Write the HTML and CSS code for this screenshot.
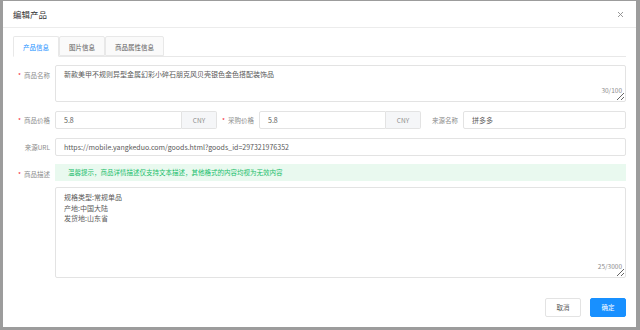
FILE: index.html
```html
<!DOCTYPE html>
<html lang="zh-CN">
<head>
    <meta charset="UTF-8">
    <meta name="viewport" content="width=device-width, initial-scale=1.0">
    <title>编辑产品</title>
    <link rel="stylesheet" href="styles.css">
</head>
<body>
    <div class="modal">
        <div class="modal_header">
            <span class="modal_title">编辑产品</span>
            <a href="" class="close">
                <svg width="7" height="7" viewBox="0 0 7 7"><path d="M1 1L6 6M6 1L1 6" stroke="#8c8c8c" stroke-width="0.9"/></svg>
            </a>
        </div>
        <div class="modal_body">
            <ul class="tabs">
                <li class="on">产品信息</li>
                <li>图片信息</li>
                <li>商品属性信息</li>
            </ul>

            <div class="form_row row_top">
                <label class="req">商品名称</label>
                <div class="field">
                    <textarea class="ta ta_name" readonly>新款美甲不规则异型金属幻彩小碎石朋克风贝壳银色金色搭配装饰品</textarea>
                    <span class="count">30/100</span>
                </div>
            </div>

            <div class="form_row">
                <label class="req">商品价格</label>
                <div class="group">
                    <span class="input">5.8</span>
                    <span class="addon">CNY</span>
                </div>
                <label class="req sub">采购价格</label>
                <div class="group">
                    <span class="input">5.8</span>
                    <span class="addon">CNY</span>
                </div>
                <label class="sub">来源名称</label>
                <span class="input grow">拼多多</span>
            </div>

            <div class="form_row">
                <label>来源URL</label>
                <span class="input grow">https://mobile.yangkeduo.com/goods.html?goods_id=297321976352</span>
            </div>

            <div class="form_row row_top">
                <label class="req">商品描述</label>
                <div class="field">
                    <div class="alert">温馨提示，商品详情描述仅支持文本描述，其他格式的内容均视为无效内容</div>
                    <textarea class="ta ta_desc" readonly>规格类型:常规单品
产地:中国大陆
发货地:山东省</textarea>
                    <span class="count">25/3000</span>
                </div>
            </div>
        </div>
        <div class="modal_footer">
            <a href="" class="btn">取消</a>
            <a href="" class="btn primary">确定</a>
        </div>
    </div>
</body>
</html>
```

FILE: styles.css
```css
*{margin:0; padding:0; box-sizing:border-box;}
a{text-decoration:none;}
ul,li{list-style:none;}

body{
    background-color:#9c9c9c;
    font-family:"Noto Sans CJK SC", "Noto Sans", sans-serif;
    color:#595959;
}

.modal{
    margin:1px 4px 0 3px;
    height:326px;
    background-color:#fff;
    display:flex;
    flex-direction:column;
}
.modal_header{
    height:27px;
    padding:0 12px 0 10px;
    border-bottom:1px solid #ececec;
    display:flex;
    align-items:center;
    justify-content:space-between;
}
.modal_title{font-size:8.5px; color:#333;}
.close{display:flex;}

.modal_body{padding:8px 10px 0 10px; flex:1;}

.tabs{
    display:flex;
    height:21px;
    border-bottom:1px solid #e8e8e8;
}
.tabs li{
    padding:0 9px;
    margin-right:0;
    font-size:6.5px;
    line-height:20px;
    color:#595959;
    background-color:#fafafa;
    border:1px solid #e8e8e8;
    border-radius:2px 2px 0 0;
}
.tabs li.on{
    color:#1890ff;
    background-color:#fff;
    border-bottom-color:#fff;
    height:21px;
}

.form_row{
    display:flex;
    align-items:center;
    margin-top:9px;
}
.form_row.row_top{align-items:flex-start; margin-top:8px;}
.form_row label{
    width:42px;
    flex-shrink:0;
    padding-right:5px;
    text-align:right;
    font-size:6.5px;
    color:#8c8c8c;
}
.row_top label{padding-top:5px;}
.form_row label.req::before{
    content:"*";
    color:#f5222d;
    margin-right:3px;
}
.form_row label.sub{width:42px;}

.field{flex:1; position:relative;}

.input{
    display:block;
    height:18px;
    line-height:16px;
    padding:0 8px;
    border:1px solid #e3e3e3;
    border-radius:2px;
    font-size:7px;
    color:#595959;
    white-space:nowrap;
}
.input.grow{flex:1;}

.group{display:flex; width:162px;}
.group .input{flex:1; border-radius:2px 0 0 2px;}
.group .addon{
    width:35px;
    height:18px;
    line-height:16px;
    text-align:center;
    border:1px solid #e3e3e3;
    border-left:0;
    border-radius:0 2px 2px 0;
    background-color:#f5f6f8;
    font-size:6.5px;
    color:#8c8c8c;
}

.ta{
    display:block;
    width:100%;
    border:1px solid #e3e3e3;
    border-radius:2px;
    padding:4px 8px;
    font-family:inherit;
    font-size:7px;
    line-height:10.5px;
    color:#595959;
    outline:none;
}
.ta_name{height:37px; padding-top:3px;}
.ta_desc{height:91px; margin-top:6px;}

.count{
    position:absolute;
    right:4px;
    bottom:7px;
    font-size:6.5px;
    color:#8c8c8c;
}

.alert{
    height:17px;
    line-height:17px;
    padding-left:13px;
    background-color:#e9f9ef;
    font-size:6.5px;
    color:#19be6b;
}

.modal_footer{
    display:flex;
    justify-content:flex-end;
    gap:9px;
    padding:0 10px 10px 0;
}
.btn{
    width:36px;
    height:19px;
    line-height:17px;
    text-align:center;
    border:1px solid #e3e3e3;
    border-radius:2px;
    font-size:6.5px;
    color:#595959;
    background-color:#fff;
}
.btn.primary{
    background-color:#1890ff;
    border-color:#1890ff;
    color:#fff;
}
```
